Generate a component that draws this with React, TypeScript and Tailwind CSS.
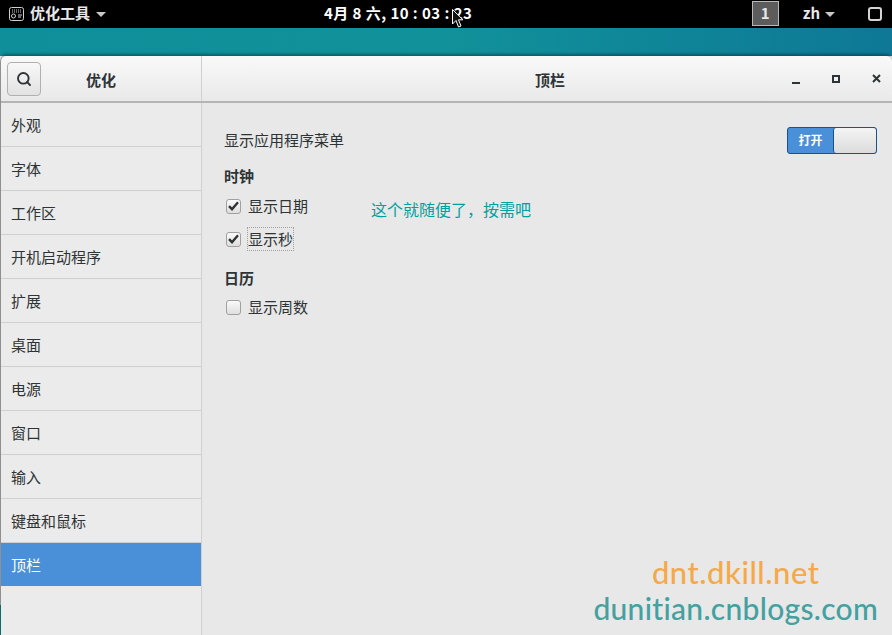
import { Search } from "lucide-react";

const sans = "font-['Noto_Sans_CJK_SC','Liberation_Sans',sans-serif]";

const navigation = [
  "外观",
  "字体",
  "工作区",
  "开机启动程序",
  "扩展",
  "桌面",
  "电源",
  "窗口",
  "输入",
  "键盘和鼠标",
];

function TopBar() {
  return (
    <div className="relative flex h-[28px] items-center bg-black pb-[1px] text-[15px] font-bold text-[#e8e8e8]">
      {/* App menu */}
      <div className="ml-[9px] flex items-center">
        <svg width="15" height="14" viewBox="0 0 15 14" fill="none" stroke="#d0d0d0">
          <rect x="0.5" y="0.5" width="14" height="13" rx="2" />
          <path d="M3 3h9" strokeDasharray="1 1" />
          <path d="M3 5h9" strokeDasharray="1 1" />
          <circle cx="4.5" cy="9" r="2" />
          <path d="M9 8h4M9 10h3" />
        </svg>
        <span className="ml-[6px]">优化工具</span>
        <span className="ml-[6px] mt-[1px] h-0 w-0 border-x-[5px] border-t-[5px] border-x-transparent border-t-[#c8c8c8]" />
      </div>

      {/* Clock */}
      <div className="ml-[218px] whitespace-pre tracking-[0.45px] text-white">4月 8 六, 10 : 03 : 23</div>

      {/* Status area */}
      <div className="ml-auto flex items-center">
        <div className="flex h-[25px] w-[27px] items-center justify-center border border-[#b8b8b8] bg-[#5c5c5c] text-[#e8e8e8]">
          1
        </div>
        <span className="ml-[24px]">zh</span>
        <span className="ml-[5px] mt-[1px] h-0 w-0 border-x-[5px] border-t-[5px] border-x-transparent border-t-[#c8c8c8]" />
        <div className="ml-[33px] mr-[10px] h-[14px] w-[14px] rounded-[3px] border-2 border-[#d4d4d4]" />
      </div>

      {/* Mouse pointer */}
      <svg className="absolute left-[452px] top-[9px]" width="12" height="20" viewBox="0 0 12 20">
        <path d="M0.5 0.5V15L4 11.5L6.5 18L9 17L6.5 10.8H11Z" fill="#111" stroke="#fff" />
      </svg>
    </div>
  );
}

function Check({ checked }: { checked: boolean }) {
  return (
    <span className="flex h-[15px] w-[15px] items-center justify-center rounded-[3px] border border-[#a0a0a0] bg-gradient-to-b from-[#fafafa] to-[#dedede]">
      {checked && (
        <svg width="11" height="10" viewBox="0 0 11 10" fill="none">
          <path d="M1 5.2L4 8.2L10 1.2" stroke="#2e3436" strokeWidth="2.4" />
        </svg>
      )}
    </span>
  );
}

function CheckRow({ label, checked, focused }: { label: string; checked: boolean; focused?: boolean }) {
  return (
    <div className="ml-[2px] flex items-center">
      <Check checked={checked} />
      <span
        className={
          focused
            ? "ml-[6px] border border-dotted border-[#a0a0a0] leading-[22px]"
            : "ml-[7px] leading-[24px]"
        }
      >
        {label}
      </span>
    </div>
  );
}

export default function App() {
  return (
    <div className={`relative flex h-[635px] w-[892px] flex-col overflow-hidden text-[15px] text-[#2e3436] ${sans}`}>
      <TopBar />
      <div className="h-[28px] bg-gradient-to-r from-[#0f8f99] via-[#11919a] to-[#0e7896]" />

      <div className="relative flex flex-1 flex-col overflow-hidden rounded-t-[6px] border-l border-[#909090] bg-[#e8e8e8] shadow-[0_-2px_3px_rgba(0,0,0,0.35)]">
        {/* Header bar */}
        <div className="flex h-[47px] border-b-2 border-[#b4b4b4] bg-gradient-to-b from-[#f9f9f9] to-[#e9e9e9]">
          <div className="flex w-[201px] items-center border-r border-[#d0d0d0] pl-[6px]">
            <button className="flex h-[34px] w-[34px] items-center justify-center rounded-[4px] border border-[#b0b0b0] bg-gradient-to-b from-[#f8f8f8] to-[#e2e2e2]">
              <Search size={16} strokeWidth={2.8} color="#2e3436" />
            </button>
            <span className="ml-[45px] mt-[3px] font-bold">优化</span>
          </div>
          <div className="flex flex-1 items-center">
            <span className="ml-[333px] mt-[3px] font-bold">顶栏</span>
            <div className="ml-auto flex items-center">
              <span className="mt-[8px] h-[2px] w-[8px] bg-[#2e3436]" />
              <span className="ml-[32px] h-[8px] w-[8px] border-2 border-[#2e3436]" />
              <svg className="ml-[32px] mr-[11px]" width="9" height="9" viewBox="0 0 9 9">
                <path d="M1 1L8 8M8 1L1 8" stroke="#2e3436" strokeWidth="2" />
              </svg>
            </div>
          </div>
        </div>

        <div className="flex flex-1">
          {/* Sidebar */}
          <aside className="w-[201px] border-r border-[#d0d0d0] bg-[#ebebeb]">
            {navigation.map((name) => (
              <div key={name} className="flex h-[44px] items-center border-b border-[#d0d0d0] pl-[10px] pt-[1px]">
                {name}
              </div>
            ))}
            <div className="flex h-[43px] items-center bg-[#4a90d9] pl-[10px] pt-[1px] text-white">顶栏</div>
          </aside>

          {/* Settings */}
          <main className="flex-1 pl-[22px] pr-[15px]">
            <div className="mt-[23px] flex h-[28px] items-center justify-between">
              <span>显示应用程序菜单</span>
              <div className="flex h-[27px] w-[90px] rounded-[3px] border border-[#1c5187] bg-[#4a90d9]">
                <span className="flex w-[45px] items-center justify-center text-[12px] font-bold text-white">打开</span>
                <span className="flex-1 rounded-[3px] border-l border-[#1c5187] bg-gradient-to-b from-[#f4f4f4] to-[#dcdcdc]" />
              </div>
            </div>

            <div className="mt-[12px] font-bold leading-[20px]">时钟</div>
            <div className="mt-[8px] flex h-[24px] items-center">
              <CheckRow label="显示日期" checked />
              <span className="ml-[63px] mt-[6px] text-[16px] text-[#00a0a0]">这个就随便了，按需吧</span>
            </div>
            <div className="mt-[9px]">
              <CheckRow label="显示秒" checked focused />
            </div>

            <div className="mt-[17px] font-bold leading-[20px]">日历</div>
            <div className="mt-[7px]">
              <CheckRow label="显示周数" checked={false} />
            </div>
          </main>
        </div>
      </div>

      {/* Strip of desktop left of the window's lower edge */}
      <div className="absolute bottom-0 left-0 h-[30px] w-[1px] bg-[#0a6a70]" />

      {/* Watermark */}
      <div className="absolute right-[14px] top-[554px] flex flex-col items-center font-['Lato',sans-serif] font-medium leading-[36px]">
        <span className="text-[31px] tracking-[0.5px] text-[#f4a94a]">dnt.dkill.net</span>
        <span className="text-[30px] tracking-[0.3px] text-[#45a0a0]">dunitian.cnblogs.com</span>
      </div>
    </div>
  );
}
